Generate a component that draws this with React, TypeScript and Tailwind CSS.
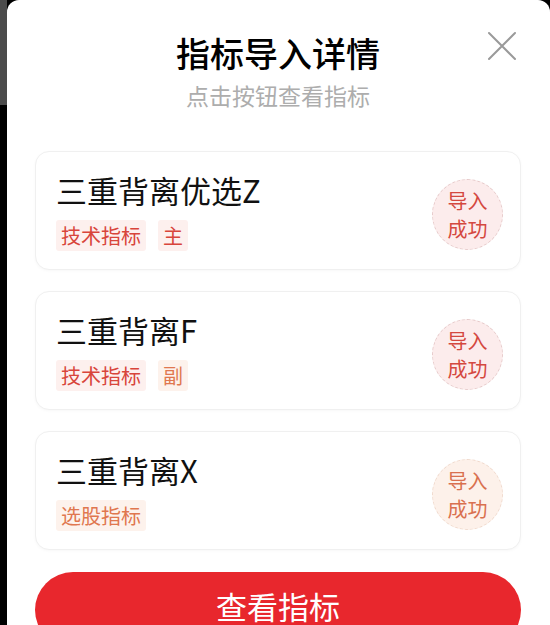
import React from 'react';

type Tone = 'red' | 'orange';

interface Tag {
  label: string;
  tone: Tone;
}

interface Indicator {
  name: string;
  tags: Tag[];
  status: Tone;
}

const indicators: Indicator[] = [
  {
    name: '三重背离优选Z',
    tags: [
      { label: '技术指标', tone: 'red' },
      { label: '主', tone: 'red' },
    ],
    status: 'red',
  },
  {
    name: '三重背离F',
    tags: [
      { label: '技术指标', tone: 'red' },
      { label: '副', tone: 'orange' },
    ],
    status: 'red',
  },
  {
    name: '三重背离X',
    tags: [{ label: '选股指标', tone: 'orange' }],
    status: 'orange',
  },
];

const tagTone: Record<Tone, string> = {
  red: 'bg-[#fdf0ee] text-[#d8453b]',
  orange: 'bg-[#fdf2ec] text-[#e0774f]',
};

const circleTone: Record<Tone, string> = {
  red: 'bg-[#fcecec] text-[#d4483f] border-[#e6c9c9]',
  orange: 'bg-[#fdf1ea] text-[#d9704f] border-[#f0d9cc]',
};

function CloseIcon() {
  return (
    <svg width="30" height="30" viewBox="0 0 30 30" fill="none" aria-hidden="true">
      <path d="M2 2L28 28M28 2L2 28" stroke="#9a9a9a" strokeWidth="2" strokeLinecap="round" />
    </svg>
  );
}

function IndicatorCard({ item }: { item: Indicator }) {
  return (
    <div className="flex h-[119px] items-center justify-between rounded-[14px] border border-[#f0f0f0] bg-white pl-[20px] pr-[17px] shadow-[0_1px_3px_rgba(0,0,0,0.03)]">
      <div className="flex flex-col gap-[12px] pt-[2px]">
        <div className="text-[31px] leading-[36px] text-[#111]">{item.name}</div>
        <div className="flex gap-[12px]">
          {item.tags.map((tag) => (
            <span
              key={tag.label}
              className={`flex h-[31px] items-center rounded-[3px] px-[5px] text-[20px] ${tagTone[tag.tone]}`}
            >
              {tag.label}
            </span>
          ))}
        </div>
      </div>

      {/* Status badge */}
      <div
        className={`mt-[8px] flex h-[71px] w-[71px] flex-col items-center justify-center rounded-full border border-dashed text-[20px] leading-[28px] ${circleTone[item.status]}`}
      >
        <span>导入</span>
        <span>成功</span>
      </div>
    </div>
  );
}

export default function App() {
  return (
    <div
      className="flex h-[625px] w-[550px] overflow-hidden bg-black"
      style={{ fontFamily: '"Noto Sans CJK SC", "Noto Sans", sans-serif' }}
    >
      {/* Backdrop edge */}
      <div className="flex w-[7px] flex-col">
        <div className="h-[105px] bg-[#4b4b4b]" />
        <div className="flex-1 bg-black" />
      </div>

      {/* Modal */}
      <div className="relative flex flex-1 flex-col rounded-t-[12px] bg-white pl-[28px] pr-[29px] pt-[30px]">
        <button className="absolute right-[33px] top-[31px]" aria-label="关闭">
          <CloseIcon />
        </button>

        <div className="text-center text-[34px] font-medium leading-[46px] text-black">指标导入详情</div>
        <div className="mt-[4px] text-center text-[23px] leading-[30px] text-[#adadad]">点击按钮查看指标</div>

        <div className="mt-[41px] flex flex-col gap-[21px]">
          {indicators.map((item) => (
            <IndicatorCard key={item.name} item={item} />
          ))}
        </div>

        <button className="mt-[22px] flex h-[76px] shrink-0 items-center justify-center rounded-full bg-[#e8272d] pb-[8px] text-[31px] text-white">
          查看指标
        </button>
      </div>
    </div>
  );
}
